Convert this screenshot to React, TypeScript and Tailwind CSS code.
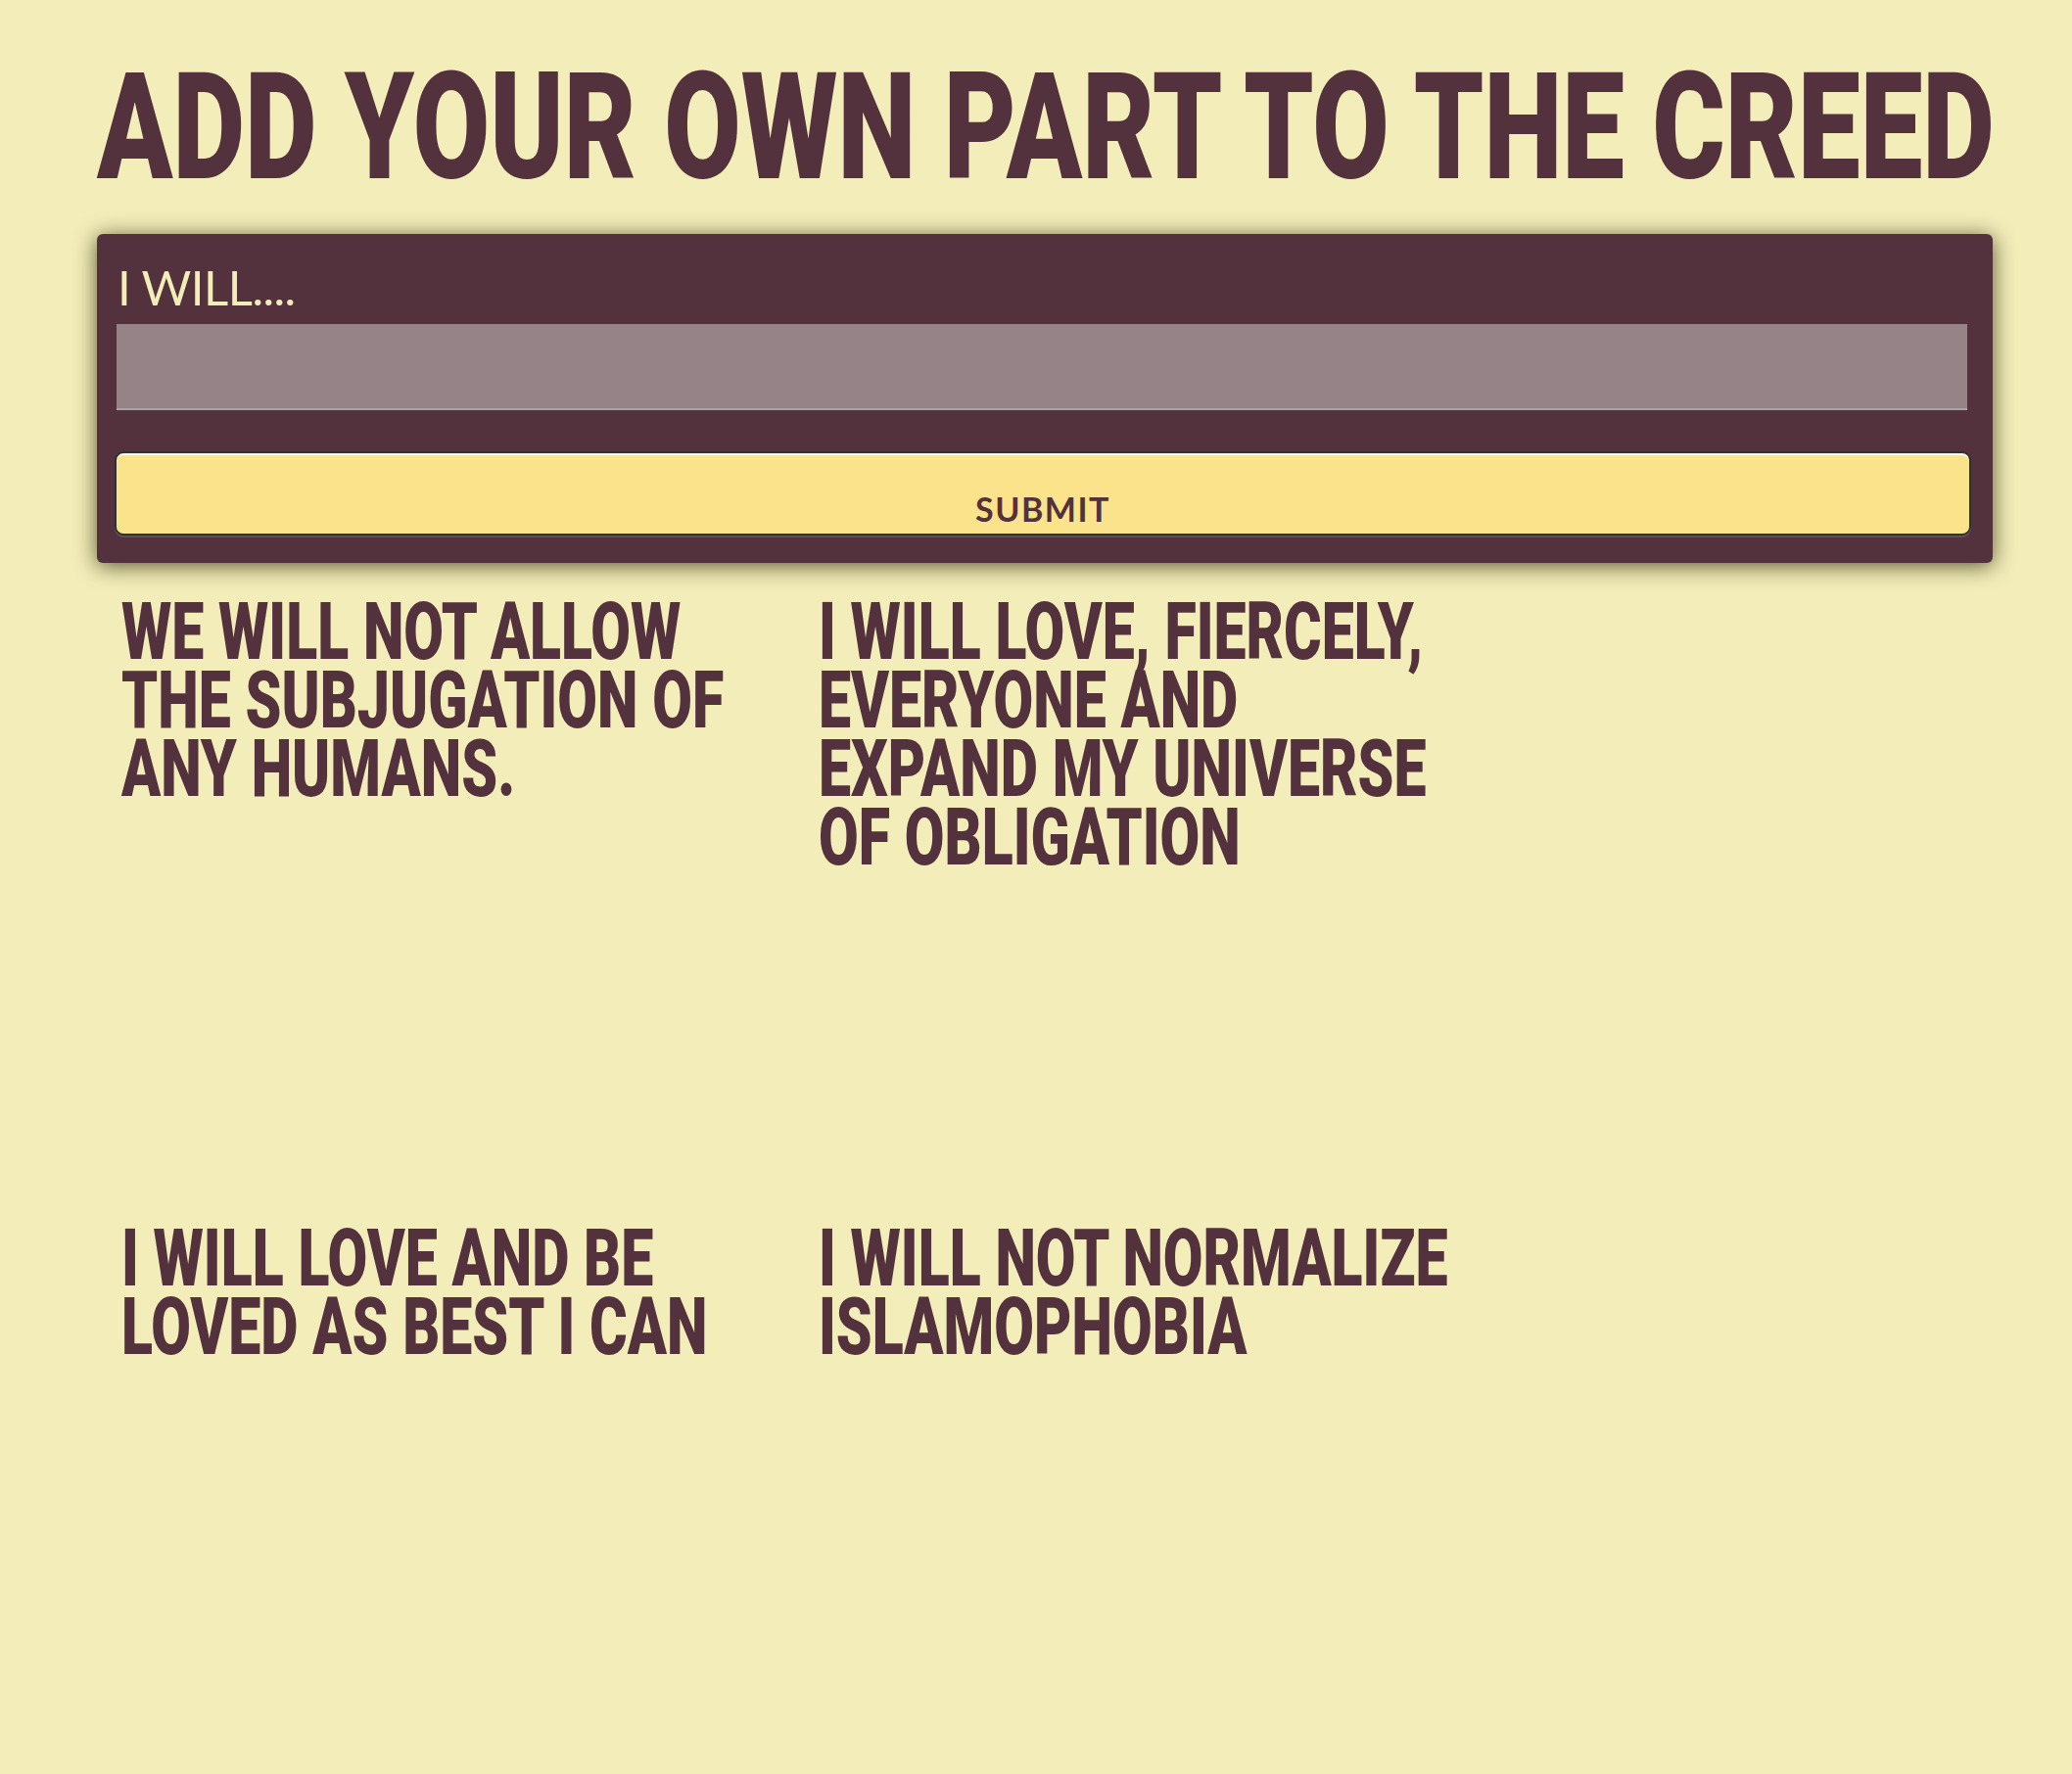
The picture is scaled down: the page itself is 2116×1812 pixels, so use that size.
import { useState } from "react";

const creeds = [
  "We will not allow the subjugation of any humans.",
  "I will love, fiercely, everyone and expand my universe of obligation",
  "I will love and be loved as best I can",
  "I will not normalize Islamophobia",
];

const CreedCard = ({ text }: { text: string }) => (
  <div className="w-[712px] h-[640px] pl-[25px] shrink-0">
    <p className="w-[906px] origin-left scale-x-[0.72] text-[82px] leading-[70px] font-black uppercase text-[#53323d] font-['Roboto',sans-serif]">
      {text}
    </p>
  </div>
);

export default function App() {
  const [value, setValue] = useState("");

  return (
    <div className="min-h-screen bg-[#f2edb9] overflow-hidden">
      <div className="pl-[99px] pr-[81px] pt-[54px]">
        <h1 className="whitespace-nowrap origin-left scale-x-[0.748] text-[152px] leading-[152px] font-black uppercase text-[#53323d] font-['Roboto',sans-serif]">
          Add your own part to the creed
        </h1>

        <form
          onSubmit={(e) => e.preventDefault()}
          className="mt-[33px] rounded-[6px] bg-[#53323d] pl-[18px] pr-[22px] pt-[29px] pb-[28px] shadow-[0_3px_22px_rgba(40,35,0,0.75)]"
        >
          <label className="block ml-[3px] mb-[13px] text-[49px] leading-[50px] font-normal tracking-[-0.5px] text-[#f3edb8] font-['Lato',sans-serif]">
            I WILL....
          </label>
          <input
            type="text"
            value={value}
            onChange={(e) => setValue(e.target.value)}
            className="block ml-[2px] mr-[4px] w-[calc(100%-6px)] h-[88px] bg-[#968387] border-b-2 border-[#a3a3a3] outline-none px-3 text-3xl text-white"
          />
          <button
            type="submit"
            className="mt-[42px] block w-full h-[86px] rounded-[9px] border-2 border-[#2b3530] bg-[#fbe38b] pt-[32px] shadow-[inset_0_2px_0_#fffbe6,0_2px_0_rgba(255,255,255,0.12)]"
          >
            <span className="block text-[34px] leading-[34px] font-bold tracking-[1.5px] text-[#53323d] font-['Lato',sans-serif]">
              SUBMIT
            </span>
          </button>
        </form>

        <div className="mt-[35px] flex flex-wrap">
          {creeds.map((c) => (
            <CreedCard key={c} text={c} />
          ))}
        </div>
      </div>
    </div>
  );
}
